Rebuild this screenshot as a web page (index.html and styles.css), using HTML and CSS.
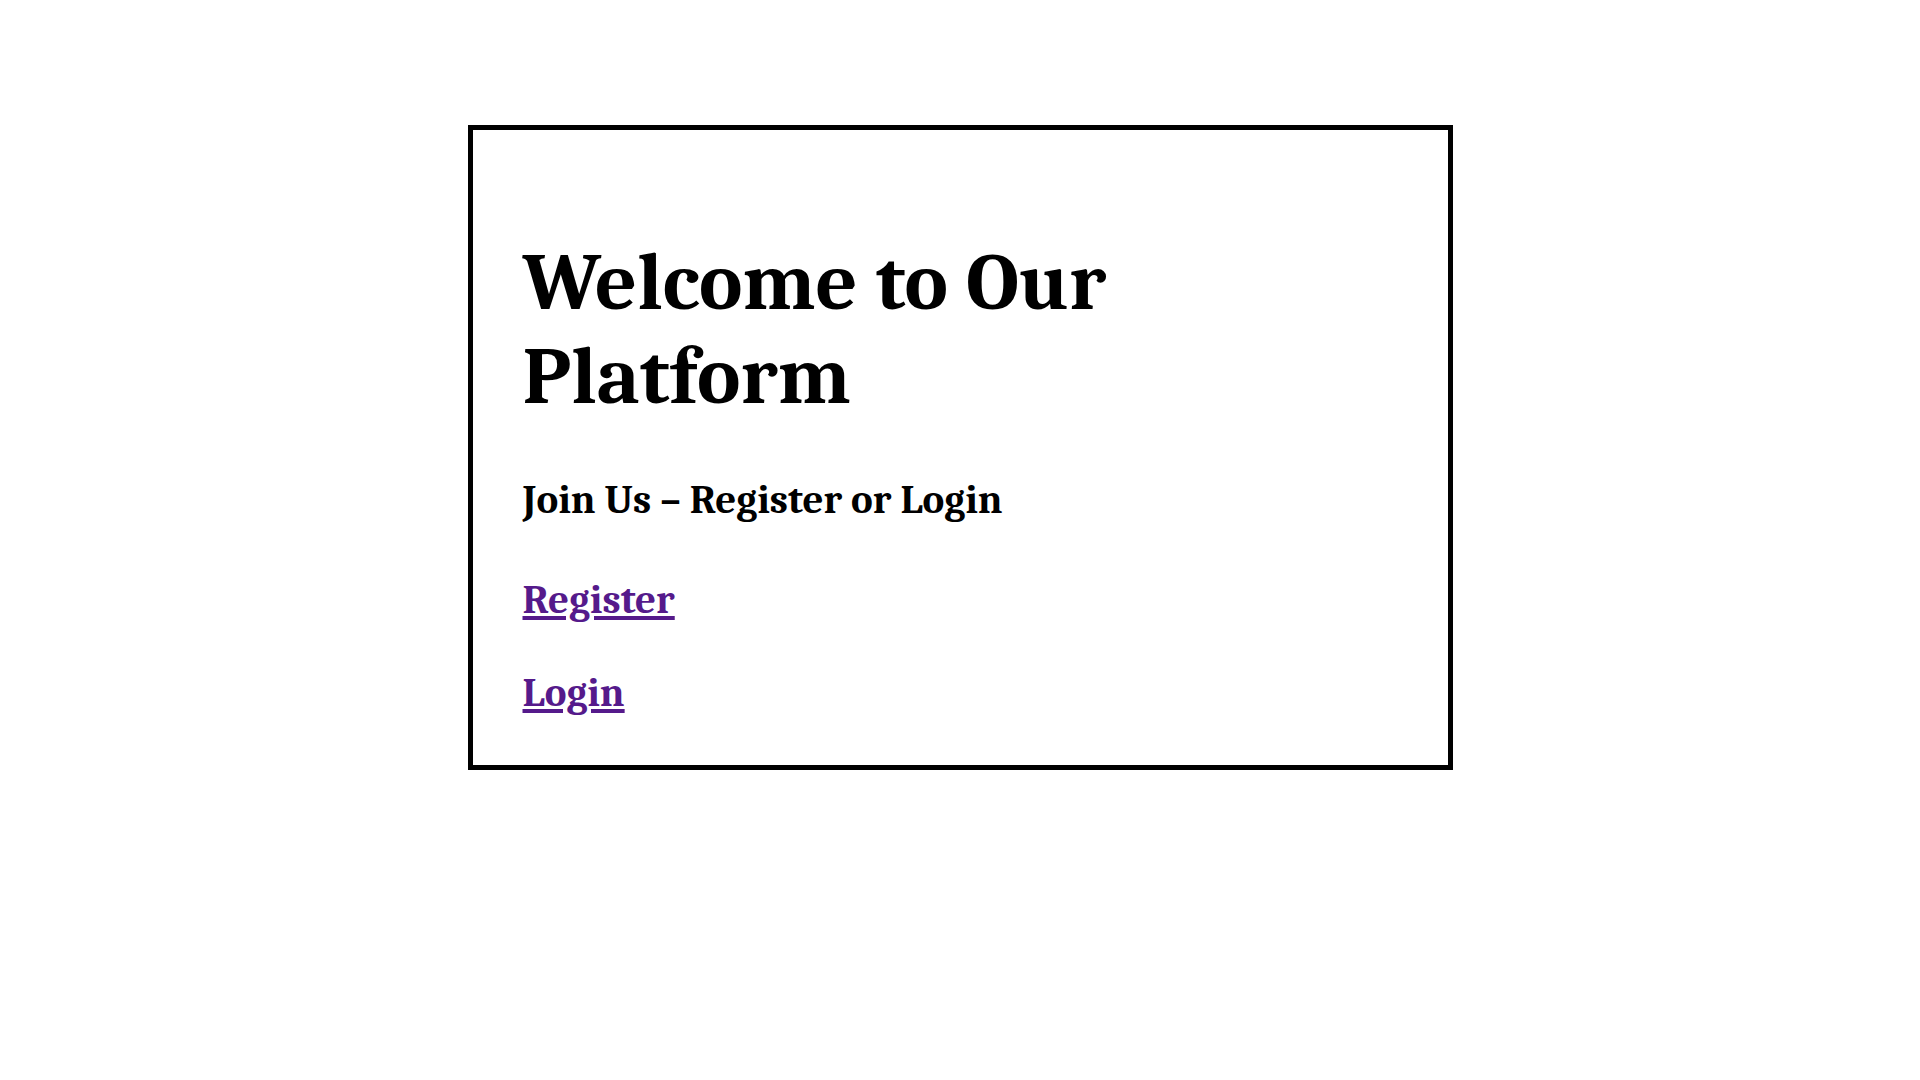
FILE: index.html
```html
<!DOCTYPE html>
<html>
<head>
<meta charset="utf-8">
<title>Welcome</title>
<link rel="stylesheet" href="styles.css">
</head>
<body>
<main class="card">
  <h1 class="title">Welcome to Our Platform</h1>
  <h2 class="subtitle">Join Us – Register or Login</h2>
  <p class="link-row"><a class="link" href="#register">Register</a></p>
  <p class="link-row"><a class="link" href="#login">Login</a></p>
</main>
</body>
</html>
```
FILE: styles.css
```css
html, body {
  margin: 0;
  padding: 0;
  background: #ffffff;
}
body {
  font-family: Caladea, Cambria, "Liberation Serif", serif;
  color: #000;
}
.card {
  box-sizing: border-box;
  width: 985px;
  margin: 125px auto 0;
  border: 5px solid #000;
  padding: 50px 50px 49px;
}
.title {
  font-size: 82px;
  line-height: 94px;
  font-weight: bold;
  margin: 56px 0 52px;
}
.subtitle {
  font-size: 41px;
  line-height: 47px;
  font-weight: bold;
  margin: 0 0 53px;
}
.link-row {
  font-size: 41px;
  line-height: 47px;
  font-weight: bold;
  margin: 0 0 46px;
}
.link-row:last-child {
  margin-bottom: 0;
}
.link {
  color: #551a8b;
}
```
